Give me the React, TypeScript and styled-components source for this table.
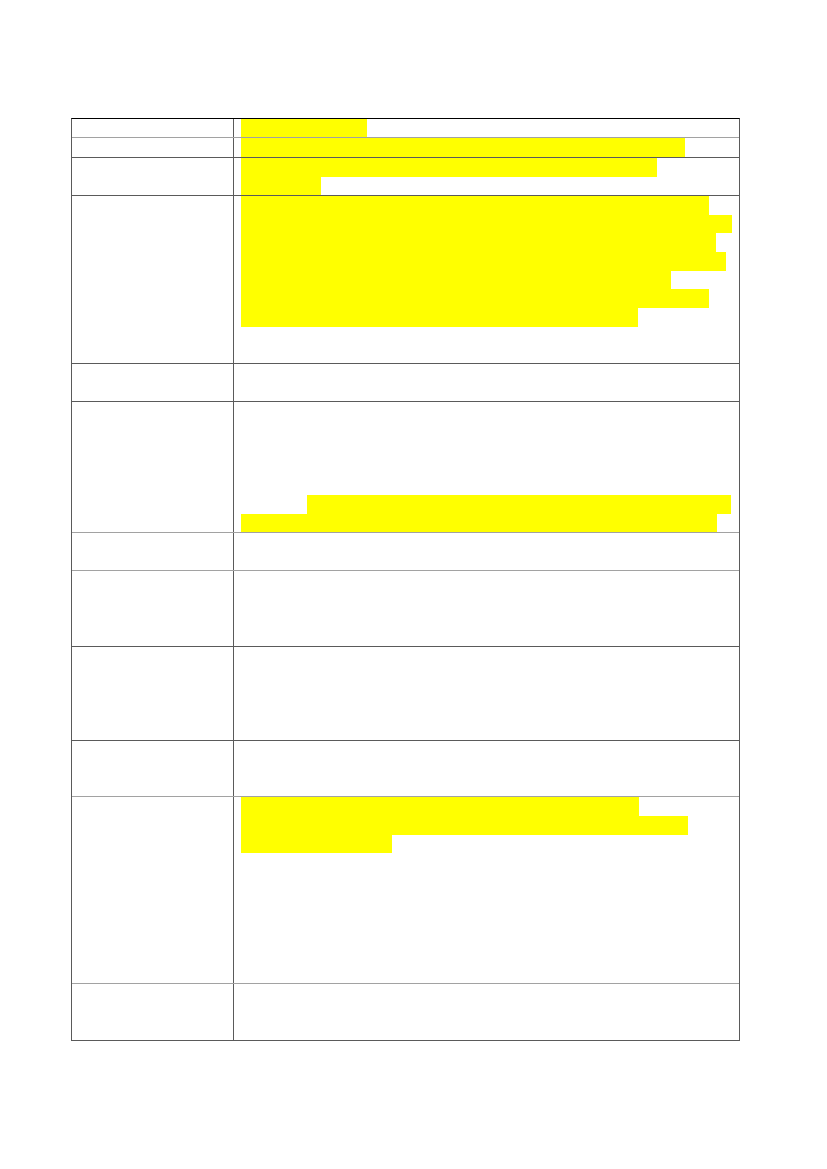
import React from "react";
import styled, { createGlobalStyle } from "styled-components";

const GlobalStyle = createGlobalStyle`
  html, body {
    margin: 0;
    padding: 0;
    background: #ffffff;
    font-family: "Liberation Sans", Arial, sans-serif;
  }
`;

const Page = styled.div`
  width: 827px;
  min-height: 1169px;
  padding-top: 118px;
  box-sizing: border-box;
`;

const Table = styled.div`
  margin-left: 71px;
  width: 669px;
  box-sizing: border-box;
  border-top: 1px solid #000000;
  border-left: 1px solid #5a5a5a;
  border-right: 1px solid #5a5a5a;
  display: flex;
  flex-direction: column;
`;

const Row = styled.div<{ $h: number; $light?: boolean }>`
  display: grid;
  grid-template-columns: 162px 1fr;
  height: ${(p) => p.$h}px;
  box-sizing: border-box;
  border-bottom: 1px solid ${(p) => (p.$light ? "#a2a2a2" : "#5a5a5a")};
`;

const LabelCell = styled.div`
  border-right: 1px solid #5a5a5a;
`;

const ValueCell = styled.div`
  padding-left: 7px;
  display: flex;
  flex-direction: column;
  overflow: hidden;
`;

const Line = styled.div`
  height: 18.66px;
  display: flex;
`;

const Mark = styled.span`
  display: block;
  height: 100%;
  background: #ffff00;
`;

type Seg = { from?: number; to: number } | null;

interface RowData {
  h: number;
  light?: boolean;
  lines: Seg[];
}

// x positions are page coordinates; text column starts at 241
const X0 = 241;

const rows: RowData[] = [
  { h: 19, light: true, lines: [{ to: 367 }] },
  { h: 20, lines: [{ to: 685 }] },
  { h: 38, lines: [{ to: 657 }, { to: 321 }] },
  {
    h: 168,
    lines: [
      { to: 709 },
      { to: 732 },
      { to: 716 },
      { to: 726 },
      { to: 671 },
      { to: 709 },
      { to: 638 },
    ],
  },
  { h: 38.4, lines: [] },
  {
    h: 131,
    light: true,
    lines: [null, null, null, null, null, { from: 307, to: 731 }, { to: 717 }],
  },
  { h: 38, light: true, lines: [] },
  { h: 75.3, lines: [] },
  { h: 94.3, lines: [] },
  { h: 56.4, light: true, lines: [] },
  { h: 186.6, light: true, lines: [{ to: 639 }, { to: 688 }, { to: 392 }] },
  { h: 56.7, lines: [] },
];

function App() {
  return (
    <>
      <GlobalStyle />
      <Page>
        <Table>
          {rows.map((r, i) => (
            <Row key={i} $h={r.h} $light={r.light}>
              <LabelCell />
              <ValueCell>
                {r.lines.map((seg, j) => (
                  <Line key={j}>
                    {seg && (
                      <Mark
                        style={{
                          marginLeft: (seg.from ?? X0) - X0,
                          width: seg.to - (seg.from ?? X0),
                        }}
                      />
                    )}
                  </Line>
                ))}
              </ValueCell>
            </Row>
          ))}
        </Table>
      </Page>
    </>
  );
}

export default App;
